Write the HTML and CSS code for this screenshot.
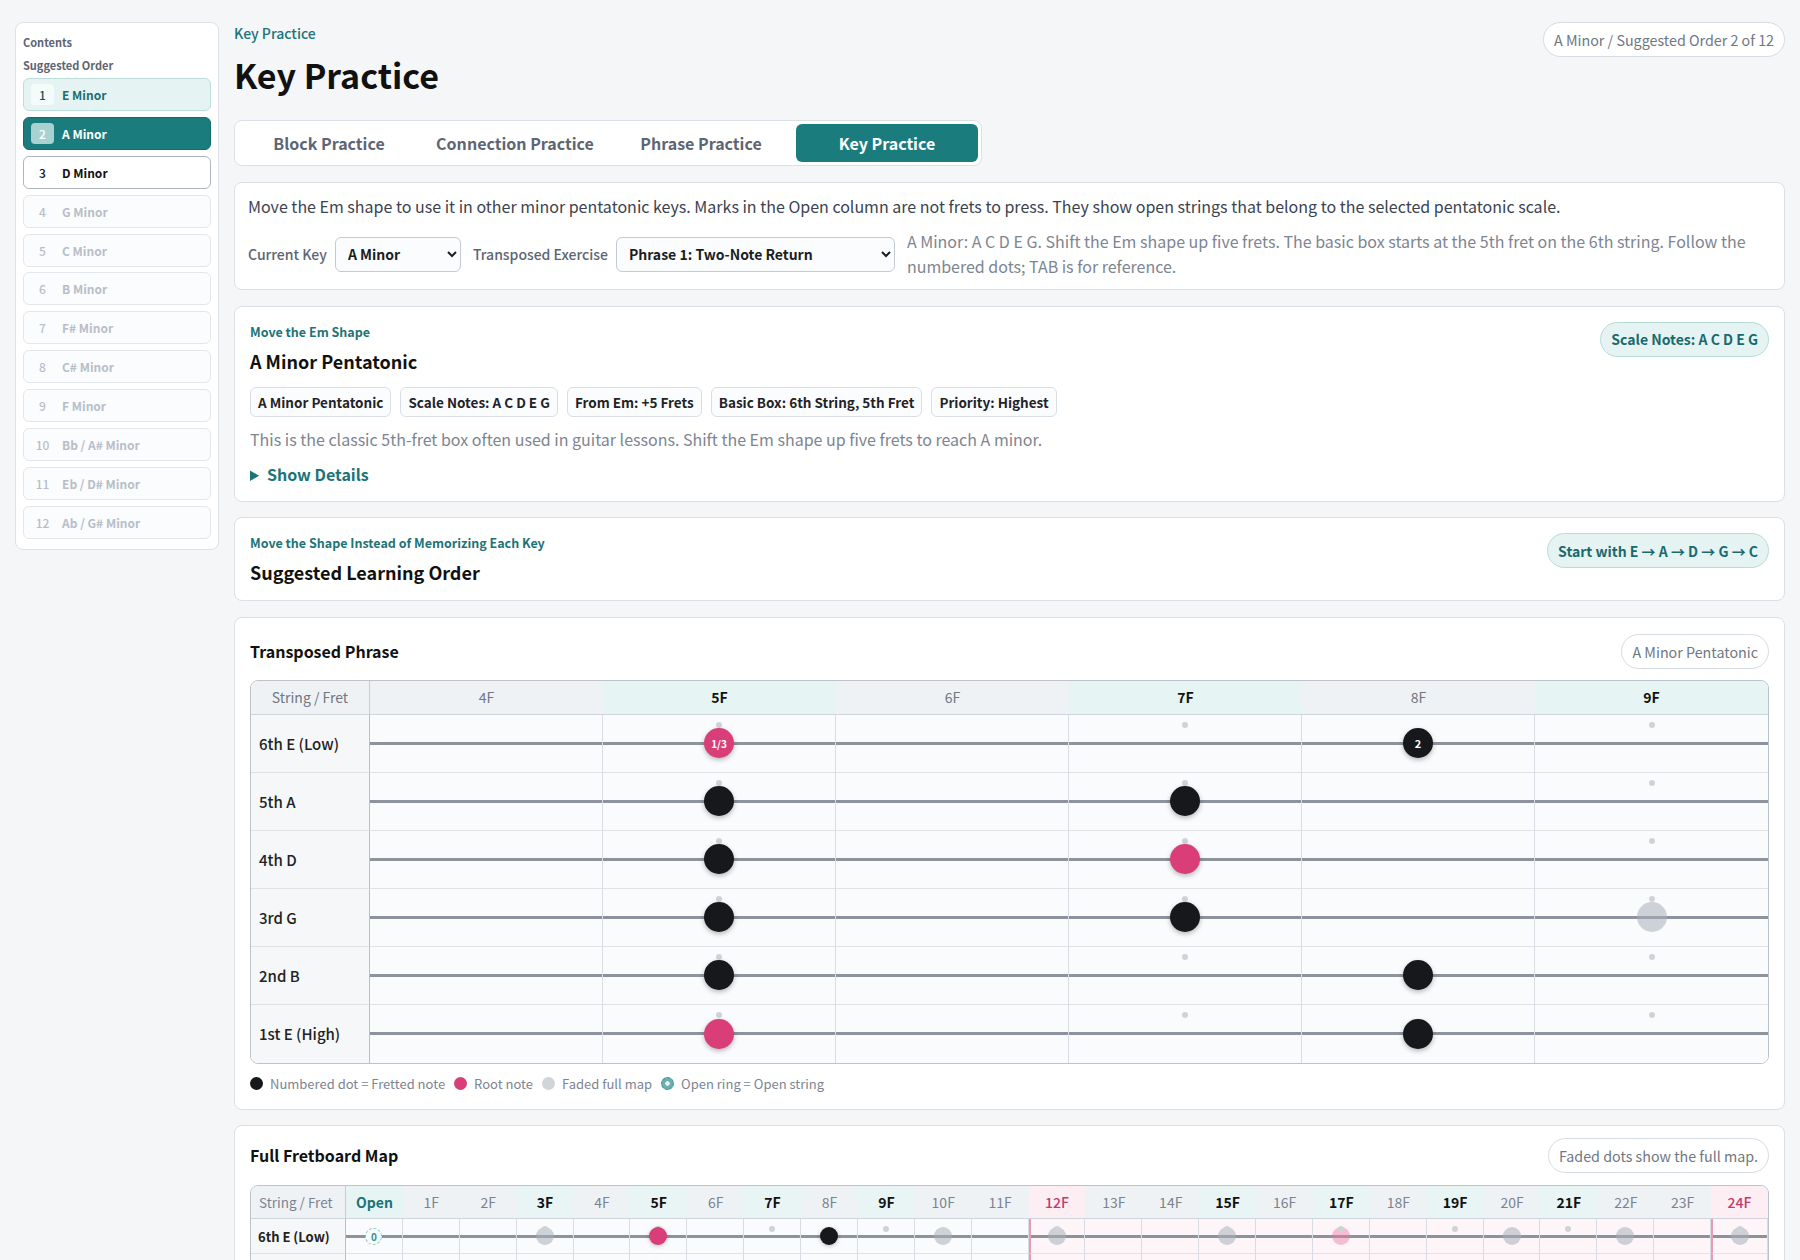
FILE: index.html
```html
<!DOCTYPE html>
<html lang="en">
<head>
    <meta charset="UTF-8">
    <title>Key Practice</title>
    <meta name="viewport" content="width=device-width, initial-scale=1.0">
    <link rel="stylesheet" href="styles.css">
</head>
<body>
<div class="page">
    <aside class="toc">
        <div class="toc-title">Contents</div>
        <div class="toc-sub">Suggested Order</div>
        <ul class="toc-list">
            <li class="toc-item done"><span class="toc-num">1</span>E Minor</li>
            <li class="toc-item active"><span class="toc-num">2</span>A Minor</li>
            <li class="toc-item next"><span class="toc-num">3</span>D Minor</li>
            <li class="toc-item"><span class="toc-num">4</span>G Minor</li>
            <li class="toc-item"><span class="toc-num">5</span>C Minor</li>
            <li class="toc-item"><span class="toc-num">6</span>B Minor</li>
            <li class="toc-item"><span class="toc-num">7</span>F# Minor</li>
            <li class="toc-item"><span class="toc-num">8</span>C# Minor</li>
            <li class="toc-item"><span class="toc-num">9</span>F Minor</li>
            <li class="toc-item"><span class="toc-num">10</span>Bb / A# Minor</li>
            <li class="toc-item"><span class="toc-num">11</span>Eb / D# Minor</li>
            <li class="toc-item"><span class="toc-num">12</span>Ab / G# Minor</li>
        </ul>
    </aside>

    <main class="main">
        <header class="page-head">
            <div>
                <div class="crumb">Key Practice</div>
                <h1>Key Practice</h1>
            </div>
            <span class="pill plain">A Minor / Suggested Order 2 of 12</span>
        </header>

        <nav class="tabs">
            <span class="tab">Block Practice</span>
            <span class="tab">Connection Practice</span>
            <span class="tab">Phrase Practice</span>
            <span class="tab active">Key Practice</span>
        </nav>

        <div class="cards">
            <!-- intro + selects -->
            <section class="card intro">
                <p class="lead">Move the Em shape to use it in other minor pentatonic keys. Marks in the Open column are not frets to press. They show open strings that belong to the selected pentatonic scale.</p>
                <div class="controls">
                    <label for="key">Current Key</label>
                    <select id="key" class="sel sel-key">
                        <option>A Minor</option>
                    </select>
                    <label for="exercise">Transposed Exercise</label>
                    <select id="exercise" class="sel sel-ex">
                        <option>Phrase 1: Two-Note Return</option>
                    </select>
                    <p class="hint">A Minor: A C D E G. Shift the Em shape up five frets. The basic box starts at the 5th fret on the 6th string. Follow the numbered dots; TAB is for reference.</p>
                </div>
            </section>

            <section class="card">
                <div class="card-head">
                    <div>
                        <div class="eyebrow">Move the Em Shape</div>
                        <h2>A Minor Pentatonic</h2>
                    </div>
                    <span class="pill teal">Scale Notes: A C D E G</span>
                </div>
                <div class="chips">
                    <span class="chip">A Minor Pentatonic</span>
                    <span class="chip">Scale Notes: A C D E G</span>
                    <span class="chip">From Em: +5 Frets</span>
                    <span class="chip">Basic Box: 6th String, 5th Fret</span>
                    <span class="chip">Priority: Highest</span>
                </div>
                <p class="desc">This is the classic 5th-fret box often used in guitar lessons. Shift the Em shape up five frets to reach A minor.</p>
                <details class="more">
                    <summary>Show Details</summary>
                </details>
            </section>

            <section class="card">
                <div class="card-head">
                    <div>
                        <div class="eyebrow">Move the Shape Instead of Memorizing Each Key</div>
                        <h2>Suggested Learning Order</h2>
                    </div>
                    <span class="pill teal">Start with E → A → D → G → C</span>
                </div>
            </section>

            <!-- Transposed phrase -->
            <section class="card board-card">
                <div class="board-head">
                    <h3>Transposed Phrase</h3>
                    <span class="pill plain">A Minor Pentatonic</span>
                </div>
                <div class="phrase-grid">
                    <div class="ph-head first">String / Fret</div>
                    <div class="ph-head">4F</div>
                    <div class="ph-head hl">5F</div>
                    <div class="ph-head">6F</div>
                    <div class="ph-head hl">7F</div>
                    <div class="ph-head">8F</div>
                    <div class="ph-head hl">9F</div>

                    <div class="ph-label">6th E (Low)</div>
                    <div class="ph-cell"></div>
                    <div class="ph-cell mark"><span class="dot root">1/3</span></div>
                    <div class="ph-cell"></div>
                    <div class="ph-cell mark"></div>
                    <div class="ph-cell"><span class="dot">2</span></div>
                    <div class="ph-cell mark"></div>

                    <div class="ph-label">5th A</div>
                    <div class="ph-cell"></div>
                    <div class="ph-cell mark"><span class="dot"></span></div>
                    <div class="ph-cell"></div>
                    <div class="ph-cell mark"><span class="dot"></span></div>
                    <div class="ph-cell"></div>
                    <div class="ph-cell mark"></div>

                    <div class="ph-label">4th D</div>
                    <div class="ph-cell"></div>
                    <div class="ph-cell mark"><span class="dot"></span></div>
                    <div class="ph-cell"></div>
                    <div class="ph-cell mark"><span class="dot root"></span></div>
                    <div class="ph-cell"></div>
                    <div class="ph-cell mark"></div>

                    <div class="ph-label">3rd G</div>
                    <div class="ph-cell"></div>
                    <div class="ph-cell mark"><span class="dot"></span></div>
                    <div class="ph-cell"></div>
                    <div class="ph-cell mark"><span class="dot"></span></div>
                    <div class="ph-cell"></div>
                    <div class="ph-cell mark"><span class="dot faded"></span></div>

                    <div class="ph-label">2nd B</div>
                    <div class="ph-cell"></div>
                    <div class="ph-cell mark"><span class="dot"></span></div>
                    <div class="ph-cell"></div>
                    <div class="ph-cell mark"></div>
                    <div class="ph-cell"><span class="dot"></span></div>
                    <div class="ph-cell mark"></div>

                    <div class="ph-label last">1st E (High)</div>
                    <div class="ph-cell last"></div>
                    <div class="ph-cell mark last"><span class="dot root"></span></div>
                    <div class="ph-cell last"></div>
                    <div class="ph-cell mark last"></div>
                    <div class="ph-cell last"><span class="dot"></span></div>
                    <div class="ph-cell mark last"></div>
                </div>
                <div class="legend">
                    <span class="lg"><i class="lg-dot black"></i>Numbered dot = Fretted note</span>
                    <span class="lg"><i class="lg-dot pink"></i>Root note</span>
                    <span class="lg"><i class="lg-dot gray"></i>Faded full map</span>
                    <span class="lg"><i class="lg-dot ring"></i>Open ring = Open string</span>
                </div>
            </section>

            <!-- Full map -->
            <section class="card board-card map-card">
                <div class="board-head">
                    <h3>Full Fretboard Map</h3>
                    <span class="pill plain">Faded dots show the full map.</span>
                </div>
                <div class="map-grid" id="map-grid"></div>
            </section>
        </div>
    </main>
</div>

<script>
    const markers = [3, 5, 7, 9, 12, 15, 17, 19, 21, 24];
    const strings = [
        { name: '6th E (Low)', notes: {0:'open',3:'fade',5:'root',8:'box',10:'fade',12:'fade',15:'fade',17:'fade-root',20:'fade',22:'fade',24:'fade'} },
        { name: '5th A', notes: {0:'open',3:'fade',5:'box',7:'box',10:'fade',12:'fade-root',15:'fade',17:'fade',19:'fade',22:'fade',24:'fade-root'} },
        { name: '4th D', notes: {0:'open',2:'fade',5:'box',7:'root',10:'fade',12:'fade',14:'fade',17:'fade',19:'fade-root',22:'fade',24:'fade'} },
        { name: '3rd G', notes: {0:'open',2:'fade-root',5:'box',7:'box',9:'fade',12:'fade',14:'fade-root',17:'fade',19:'fade',21:'fade',24:'fade'} },
        { name: '2nd B', notes: {1:'fade',3:'fade',5:'box',8:'box',10:'fade-root',13:'fade',15:'fade',17:'fade',20:'fade',22:'fade-root'} },
        { name: '1st E (High)', notes: {0:'open',3:'fade',5:'root',8:'box',10:'fade',12:'fade',15:'fade',17:'fade-root',20:'fade',22:'fade',24:'fade'} }
    ];
    const grid = document.getElementById('map-grid');

    // header row
    const corner = document.createElement('div');
    corner.className = 'mh first';
    corner.textContent = 'String / Fret';
    grid.appendChild(corner);
    for (let f = 0; f <= 24; f++) {
        const h = document.createElement('div');
        h.className = 'mh';
        if (f === 0) { h.classList.add('open'); h.textContent = 'Open'; }
        else h.textContent = f + 'F';
        if (f === 12 || f === 24) h.classList.add('oct');
        else if (markers.includes(f)) h.classList.add('hl');
        grid.appendChild(h);
    }

    // string rows
    strings.forEach(s => {
        const label = document.createElement('div');
        label.className = 'map-label';
        label.textContent = s.name;
        grid.appendChild(label);
        for (let f = 0; f <= 24; f++) {
            const cell = document.createElement('div');
            cell.className = 'map-cell';
            if (f >= 12) cell.classList.add('high');
            if (f === 12 || f === 24) cell.classList.add('octave');
            if (markers.includes(f)) cell.classList.add('mark');
            const type = s.notes[f];
            if (type) {
                const d = document.createElement('span');
                d.className = 'mdot ' + type;
                if (type === 'open') d.textContent = '0';
                cell.appendChild(d);
            }
            grid.appendChild(cell);
        }
    });
</script>
</body>
</html>
```

FILE: styles.css
```css
* {
    box-sizing: border-box;
}
body {
    margin: 0;
    background: #f4f6f8;
    font-family: "Noto Sans CJK JP", "Noto Sans", sans-serif;
    color: #1f2328;
}
.page {
    display: flex;
    align-items: flex-start;
    gap: 15px;
    padding: 21px 15px 40px;
}

/* sidebar */
.toc {
    width: 204px;
    flex: none;
    margin-top: 1px;
    background: #fff;
    border: 1px solid #dde2e8;
    border-radius: 8px;
    padding: 11px 7px 10px;
}
.toc-title, .toc-sub {
    font-size: 11px;
    line-height: 16px;
    font-weight: 700;
    color: #5d6571;
}
.toc-sub {
    margin-top: 7px;
}
.toc-list {
    list-style: none;
    margin: 5px 0 0;
    padding: 0;
    display: flex;
    flex-direction: column;
    gap: 5.9px;
}
.toc-item {
    height: 33px;
    display: flex;
    align-items: center;
    gap: 8px;
    padding: 0 7px;
    border: 1px solid #e3e7ec;
    border-radius: 6px;
    background: #fbfcfd;
    color: #b8bec8;
    font-size: 12px;
    font-weight: 700;
}
.toc-num {
    width: 23px;
    height: 21px;
    border-radius: 4px;
    display: flex;
    align-items: center;
    justify-content: center;
    font-weight: 500;
}
.toc-item.done {
    background: #e5f4f3;
    border-color: #bcdedb;
    color: #1d6f71;
}
.toc-item.done .toc-num {
    background: #f4fbfb;
    color: #1d4f50;
}
.toc-item.active {
    background: #1b7c7e;
    border-color: #166b6d;
    color: #fff;
}
.toc-item.active .toc-num {
    background: #a8d2d2;
    color: #fff;
}
.toc-item.next {
    background: #fff;
    border-color: #aeb6c1;
    color: #111;
}

/* main column */
.main {
    flex: 1;
    min-width: 0;
}
.page-head {
    display: flex;
    justify-content: space-between;
    align-items: flex-start;
}
.crumb {
    margin-top: 2px;
    font-size: 14px;
    line-height: 20px;
    font-weight: 500;
    color: #1b7478;
}
h1 {
    margin: 12px 0 0;
    font-size: 34px;
    line-height: 40px;
    font-weight: 700;
    color: #111;
}
.pill {
    display: inline-flex;
    align-items: center;
    height: 35px;
    padding: 0 10px;
    border-radius: 18px;
    white-space: nowrap;
    flex: none;
}
.pill.plain {
    margin-top: 1px;
    background: #fff;
    border: 1px solid #d6dce3;
    color: #6f7783;
    font-size: 14.3px;
}
.pill.teal {
    background: #e5f4f3;
    border: 1px solid #b7dcd8;
    color: #1a6a6d;
    font-size: 14px;
    font-weight: 700;
}

.tabs {
    margin-top: 25px;
    display: grid;
    grid-template-columns: repeat(4, 182px);
    gap: 4px;
    width: fit-content;
    padding: 3px;
    background: #fff;
    border: 1px solid #dbe0e6;
    border-radius: 8px;
}
.tab {
    height: 38px;
    display: flex;
    align-items: center;
    justify-content: center;
    border-radius: 6px;
    font-size: 16px;
    font-weight: 600;
    color: #5d6573;
}
.tab.active {
    background: #1b7c7e;
    color: #fff;
}

.cards {
    margin-top: 16px;
    display: flex;
    flex-direction: column;
    gap: 15.5px;
}
.card {
    background: #fff;
    border: 1px solid #dbe0e6;
    border-radius: 8px;
    padding: 15px;
}

/* intro card */
.card.intro {
    padding: 11px 13px 10px;
}
.lead {
    margin: 0;
    font-size: 16px;
    line-height: 24px;
    color: #3b4350;
}
.controls {
    margin-top: 11px;
    display: flex;
    align-items: center;
    gap: 8px;
}
.controls label {
    font-size: 14px;
    font-weight: 500;
    color: #5d6573;
    white-space: nowrap;
}
.sel {
    height: 35px;
    padding: 0 8px;
    margin-right: 4px;
    border: 1px solid #c3cad3;
    border-radius: 6px;
    background: #fbfcfd;
    font-family: inherit;
    font-size: 14px;
    font-weight: 700;
    color: #1a1d22;
    flex: none;
}
.sel-key {
    width: 126px;
}
.sel-ex {
    width: 279px;
}
.hint {
    flex: 1;
    margin: 0;
    font-size: 16px;
    line-height: 25px;
    color: #7d8591;
}

/* heading cards */
.card-head {
    display: flex;
    justify-content: space-between;
    align-items: flex-start;
}
.eyebrow {
    font-size: 12.5px;
    line-height: 20px;
    font-weight: 700;
    color: #1b7478;
}
h2 {
    margin: 6px 0 0;
    font-size: 18px;
    line-height: 26px;
    font-weight: 700;
    color: #111;
}
.chips {
    margin-top: 13px;
    display: flex;
    gap: 9px;
}
.chip {
    height: 30px;
    display: inline-flex;
    align-items: center;
    padding: 0 7px;
    border: 1px solid #d9dee5;
    border-radius: 6px;
    background: #fbfcfd;
    font-size: 13.5px;
    font-weight: 700;
    color: #1f2328;
}
.desc {
    margin: 11px 0 0;
    font-size: 16px;
    line-height: 22px;
    color: #7d8591;
}
.more {
    margin-top: 12px;
}
.more summary {
    font-size: 16px;
    line-height: 24px;
    font-weight: 700;
    color: #1b7478;
    cursor: pointer;
}

/* fretboards */
.board-card {
    padding-bottom: 15px;
}
.map-card {
    padding-top: 11px;
}
.board-head {
    display: flex;
    justify-content: space-between;
    align-items: center;
}
h3 {
    margin: 0;
    font-size: 16px;
    font-weight: 700;
    color: #111;
}
.phrase-grid {
    margin-top: 11px;
    display: grid;
    grid-template-columns: 119px repeat(6, 1fr);
    grid-template-rows: 34px repeat(6, 58px);
    border: 1px solid #bcc3cc;
    border-radius: 8px;
    overflow: hidden;
}
.ph-head {
    display: flex;
    align-items: center;
    justify-content: center;
    background: #eef2f5;
    border-bottom: 1px solid #cfd5dc;
    font-size: 14px;
    color: #6f7783;
}
.ph-head.first {
    border-right: 1px solid #c6ccd4;
}
.ph-head.hl {
    background: #e6f4f3;
    color: #111;
    font-weight: 700;
}
.ph-label {
    display: flex;
    align-items: center;
    padding-left: 8px;
    background: #f5f7f9;
    border-right: 1px solid #b9c0ca;
    border-bottom: 1px solid #dfe3e8;
    font-size: 15px;
    font-weight: 500;
    color: #222;
}
.ph-cell {
    position: relative;
    display: flex;
    align-items: center;
    justify-content: center;
    background: linear-gradient(#8c939d, #8c939d) center / 100% 3px no-repeat #f9fbfc;
    border-right: 1px solid #d9dde3;
    border-bottom: 1px solid #dfe3e8;
}
.ph-cell:nth-child(7n) {
    border-right: none;
}
.ph-cell.last, .ph-label.last {
    border-bottom: none;
}
.ph-cell.mark::before, .map-cell.mark::before {
    content: "";
    position: absolute;
    top: 7px;
    left: 50%;
    width: 6px;
    height: 6px;
    margin-left: -3px;
    border-radius: 50%;
    background: #cfd3d8;
}
.dot {
    position: relative;
    z-index: 1;
    width: 30px;
    height: 30px;
    border-radius: 50%;
    background: #17181c;
    box-shadow: 0 2px 5px rgba(0, 0, 0, 0.28);
    display: flex;
    align-items: center;
    justify-content: center;
    color: #fff;
    font-size: 11px;
    font-weight: 700;
}
.dot.root {
    background: #d93e78;
    font-size: 10px;
}
.dot.faded {
    background: rgba(170, 175, 185, 0.55);
    box-shadow: none;
}

.legend {
    margin-top: 10px;
    display: flex;
    gap: 9px;
    line-height: 20px;
    font-size: 13px;
    color: #7d8591;
}
.lg {
    display: inline-flex;
    align-items: center;
    gap: 7px;
}
.lg-dot {
    width: 13px;
    height: 13px;
    border-radius: 50%;
    display: inline-block;
}
.lg-dot.black { background: #17181c; }
.lg-dot.pink { background: #d93e78; }
.lg-dot.gray { background: #d1d4d9; }
.lg-dot.ring {
    background: radial-gradient(circle, #e6f3f2 0 2px, #6aaead 2.5px);
    border: 1px dashed #3f8f8e;
}

/* full map */
.map-grid {
    margin-top: 12px;
    display: grid;
    grid-template-columns: 95px repeat(25, 1fr);
    grid-template-rows: 33px;
    grid-auto-rows: 35px;
    border: 1px solid #bcc3cc;
    border-radius: 8px;
    overflow: hidden;
}
.mh {
    display: flex;
    align-items: center;
    justify-content: center;
    background: #eef2f5;
    border-bottom: 1px solid #cfd5dc;
    font-size: 14px;
    color: #7b8390;
}
.mh.first {
    justify-content: flex-start;
    padding-left: 8px;
    font-size: 13.5px;
    border-right: 1px solid #c6ccd4;
}
.mh.open {
    background: #e6f4f3;
    color: #1a7475;
    font-weight: 700;
}
.mh.hl {
    background: #e8f5f4;
    color: #111;
    font-weight: 700;
}
.mh.oct {
    background: #fdeef3;
    color: #c43a6e;
    font-weight: 500;
}
.map-label {
    display: flex;
    align-items: center;
    padding-left: 7px;
    background: #f5f7f9;
    border-right: 1px solid #b9c0ca;
    border-bottom: 1px solid #dfe3e8;
    font-size: 13px;
    font-weight: 600;
    color: #222;
    white-space: nowrap;
}
.map-cell {
    position: relative;
    display: flex;
    align-items: center;
    justify-content: center;
    background: linear-gradient(#8c939d, #8c939d) center / 100% 3px no-repeat #f9fbfc;
    border-right: 1px solid #d9dde3;
    border-bottom: 1px solid #dfe3e8;
}
.map-cell.high {
    background: linear-gradient(#8c939d, #8c939d) center / 100% 3px no-repeat #fdf5f8;
}
.map-cell.octave {
    border-left: 2px solid #e79bb8;
}
.mdot {
    width: 18px;
    height: 18px;
    border-radius: 50%;
    display: flex;
    align-items: center;
    justify-content: center;
}
.mdot.box, .mdot.root {
    position: relative;
    z-index: 1;
    background: #17181c;
    box-shadow: 0 1px 4px rgba(0, 0, 0, 0.25);
}
.mdot.root {
    background: #d93e78;
}
.mdot.fade {
    background: rgba(170, 175, 185, 0.55);
}
.mdot.fade-root {
    background: rgba(232, 122, 162, 0.45);
}
.mdot.open {
    width: 17px;
    height: 17px;
    border: 1px dashed #8cc5c4;
    background: #f4fbfb;
    color: #3a8d8d;
    font-size: 10px;
    font-weight: 600;
}
```
